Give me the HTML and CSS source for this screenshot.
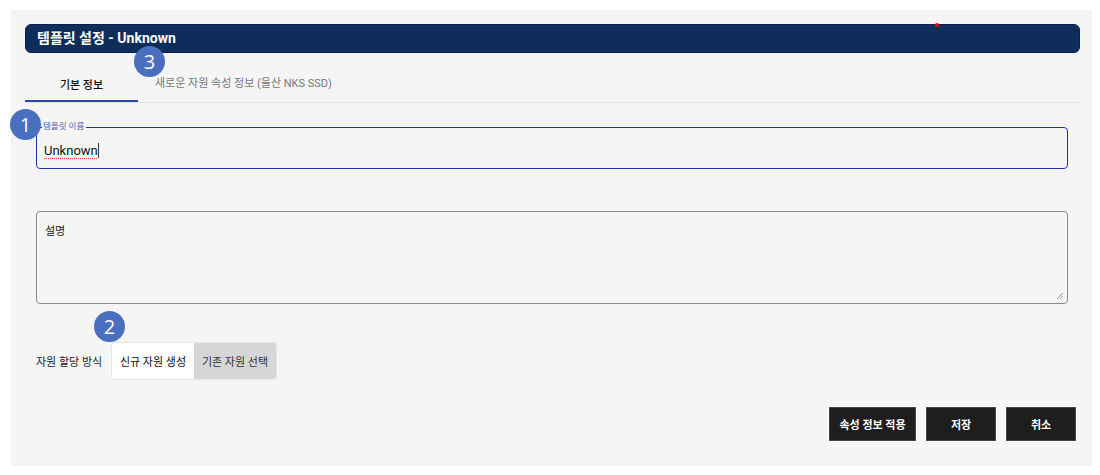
FILE: index.html
```html
<!DOCTYPE html>
<html lang="ko">
<head>
<meta charset="utf-8">
<link rel="stylesheet" href="styles.css">
</head>
<body>
<div class="panel">
  <div class="header">템플릿 설정 - Unknown</div>
  <div class="tabs">
    <div class="tab active">기본 정보</div>
    <div class="tab">새로운 자원 속성 정보 (울산 NKS SSD)</div>
  </div>
  <div class="form">
    <div class="field">
      <span class="legend">템플릿 이름</span>
      <span class="value">Unknown</span><span class="caret"></span>
    </div>
    <div class="textarea">
      <span class="placeholder">설명</span>
      <svg class="grip" width="8" height="8" viewBox="0 0 8 8"><path d="M7 1L1 7M7 4L4 7" stroke="#999" stroke-width="1"/></svg>
    </div>
    <div class="alloc">
      <span class="alloc-label">자원 할당 방식</span>
      <div class="toggle">
        <div class="opt on">신규 자원 생성</div>
        <div class="opt off">기존 자원 선택</div>
      </div>
    </div>
  </div>
  <div class="actions">
    <button class="btn wide">속성 정보 적용</button>
    <button class="btn">저장</button>
    <button class="btn">취소</button>
  </div>
</div>
<span class="badge b1">1</span>
<span class="badge b2">2</span>
<span class="badge b3">3</span>
<span class="reddot"></span>
</body>
</html>
```
FILE: styles.css
```css
html, body { margin: 0; padding: 0; background: #fff; }
body {
  font-family: Roboto, "Noto Sans CJK KR", sans-serif;
  color: #222;
  position: relative;
  width: 1100px;
  height: 475px;
  overflow: hidden;
}
.panel {
  margin: 10px 0 0 11px;
  width: 1081px;
  height: 456px;
  box-sizing: border-box;
  background: #f5f5f5;
  padding: 14px 12px 0 14px;
  display: flex;
  flex-direction: column;
}
.header {
  height: 29px;
  background: #0f2d5a;
  border: 1px solid #0a1f4a;
  box-sizing: border-box;
  border-radius: 6px;
  color: #fff;
  font-weight: 700;
  font-size: 14px;
  line-height: 27px;
  padding-left: 11px;
}
.tabs {
  margin-top: 13px;
  display: flex;
  border-bottom: 1px solid #e2e2e2;
  height: 36px;
}
.tab {
  font-size: 11px;
  color: #777;
  padding: 0 17px;
  line-height: 36px;
  box-sizing: border-box;
  height: 36px;
}
.tab.active {
  width: 113px;
  text-align: center;
  color: #111;
  font-weight: 500;
  border-bottom: 2px solid #2c4a9e;
  padding: 2px 0 0;
}
.form {
  padding: 24px 12px 0 11px;
  display: flex;
  flex-direction: column;
}
.field {
  height: 42px;
  box-sizing: border-box;
  border: 1.5px solid #2233a8;
  border-radius: 4px;
  padding: 4px 7px 0;
  display: flex;
  align-items: center;
  position: relative;
}
.legend {
  position: absolute;
  left: 5px;
  top: -7px;
  font-size: 8.5px;
  color: #4a5cb5;
  padding: 0 2px 0 1px;
  line-height: 11px;
  background: #f5f5f5;
}
.value {
  font-size: 13px;
  color: #111;
  text-decoration: underline dotted #e05050;
  text-underline-offset: 3px;
}
.caret {
  width: 1px;
  height: 15px;
  background: #333;
}
.textarea {
  margin-top: 42px;
  height: 93px;
  box-sizing: border-box;
  border: 1px solid #8a8a8a;
  border-radius: 4px;
  padding: 8px 8px;
  position: relative;
}
.placeholder { font-size: 11px; color: #222; }
.grip { position: absolute; right: 3px; bottom: 3px; }
.alloc {
  margin-top: 39px;
  display: flex;
  align-items: center;
}
.alloc-label { font-size: 11px; width: 76px; color: #222; }
.toggle {
  display: flex;
  height: 36px;
  border-radius: 3px;
  overflow: hidden;
  box-shadow: 0 0 0 1px #e6e6e6;
}
.opt {
  width: 82px;
  font-size: 11px;
  display: flex;
  align-items: center;
  justify-content: center;
}
.opt.on { background: #fff; color: #111; }
.opt.off { background: #d6d6d6; color: #333; }
.actions {
  margin-top: 28px;
  display: flex;
  justify-content: flex-end;
  gap: 10px;
  padding-right: 4px;
}
.btn {
  width: 70px;
  height: 34px;
  background: #1e1e1e;
  border: 1px solid #444;
  outline: 1px solid #fff;
  color: #fff;
  font-family: Roboto, "Noto Sans CJK KR", sans-serif;
  font-weight: 700;
  font-size: 11px;
  padding: 0;
}
.btn.wide { width: 87px; }
.badge {
  position: absolute;
  width: 31px;
  height: 31px;
  border-radius: 50%;
  background: #4a6fbe;
  color: #fff;
  font-size: 20px;
  line-height: 31px;
  text-align: center;
  font-family: "Open Sans", sans-serif;
}
.b1 { left: 10px; top: 109px; }
.b2 { left: 94px; top: 311px; }
.b3 { left: 134px; top: 46px; }
.reddot {
  position: absolute;
  left: 935px;
  top: 23px;
  width: 4px;
  height: 4px;
  border-radius: 50%;
  background: #e00;
}
```
